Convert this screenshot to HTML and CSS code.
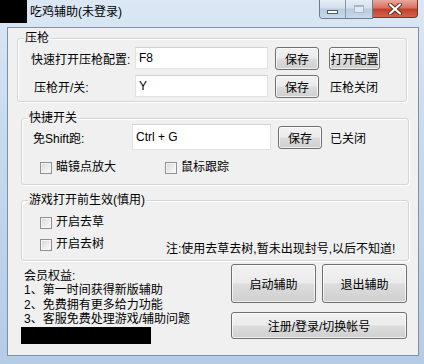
FILE: index.html
```html
<!DOCTYPE html>
<html lang="zh-CN">

<head>
    <meta charset="UTF-8">
    <title>吃鸡辅助(未登录)</title>
    <link rel="stylesheet" href="styles.css">
</head>

<body>
    <div class="window">
        <div class="titlebar">
            <div class="app-icon"></div>
            <div class="title">吃鸡辅助(未登录)</div>
            <div class="controls">
                <div class="ctl-pair">
                    <span class="ctl ctl-min"><i></i></span>
                    <span class="ctl ctl-max"><i></i></span>
                </div>
                <span class="ctl ctl-close">
                    <svg width="16" height="12" viewBox="0 0 16 12">
                        <path d="M3 1.5 L13 10.5 M13 1.5 L3 10.5" stroke="#5a2a24" stroke-width="4" stroke-linecap="round"/>
                        <path d="M3 1.5 L13 10.5 M13 1.5 L3 10.5" stroke="#fff" stroke-width="2.2" stroke-linecap="round"/>
                    </svg>
                </span>
            </div>
        </div>

        <div class="client">
            <!-- 压枪 -->
            <div class="group group-recoil">
                <span class="legend">压枪</span>
                <div class="row">
                    <label class="field-label label-cfg">快速打开压枪配置:</label>
                    <input class="field field-sm" type="text" value="F8">
                    <button class="btn btn-save">保存</button>
                    <button class="btn btn-open">打开配置</button>
                </div>
                <div class="row">
                    <label class="field-label label-switch">压枪开/关:</label>
                    <input class="field field-sm" type="text" value="Y">
                    <button class="btn btn-save">保存</button>
                    <span class="status">压枪关闭</span>
                </div>
            </div>

            <!-- 快捷开关 -->
            <div class="group group-hotkey">
                <span class="legend">快捷开关</span>
                <div class="row row-tall">
                    <label class="field-label label-shift">免Shift跑:</label>
                    <input class="field field-lg" type="text" value="Ctrl + G">
                    <button class="btn btn-save btn-save2">保存</button>
                    <span class="status">已关闭</span>
                </div>
                <div class="check-row check-first">
                    <label class="check"><span class="box"></span>瞄镜点放大</label>
                    <label class="check"><span class="box"></span>鼠标跟踪</label>
                </div>
            </div>

            <!-- 游戏打开前生效 -->
            <div class="group group-game">
                <span class="legend">游戏打开前生效(慎用)</span>
                <div class="check-row check-grass">
                    <label class="check"><span class="box"></span>开启去草</label>
                </div>
                <div class="check-row check-tree">
                    <label class="check"><span class="box"></span>开启去树</label>
                    <span class="note">注:使用去草去树,暂未出现封号,以后不知道!</span>
                </div>
            </div>

            <div class="bottom">
                <div class="member">
                    <div>会员权益:</div>
                    <div>1、第一时间获得新版辅助</div>
                    <div>2、免费拥有更多给力功能</div>
                    <div>3、客服免费处理游戏/辅助问题</div>
                    <div class="redacted"></div>
                </div>
                <div class="actions">
                    <button class="btn btn-big">启动辅助</button>
                    <button class="btn btn-big">退出辅助</button>
                    <button class="btn btn-wide">注册/登录/切换帐号</button>
                </div>
            </div>
        </div>
    </div>
</body>

</html>
```

FILE: styles.css
```css
* {
    box-sizing: border-box;
}

body {
    margin: 0;
    font-family: "Liberation Sans", "Noto Sans CJK SC", sans-serif;
    font-size: 12px;
    color: #000;
    background: #b9cfe7;
}

.window {
    width: 424px;
    height: 364px;
    display: flex;
    flex-direction: column;
    background: linear-gradient(to bottom, #dbe7f4 0%, #c6d9ee 40%, #b4cce6 100%);
    overflow: hidden;
}

/* 标题栏 */
.titlebar {
    height: 27px;
    display: flex;
    align-items: flex-start;
    flex-shrink: 0;
}

.app-icon {
    width: 27px;
    height: 23px;
    background: #000;
}

.title {
    margin-left: 3px;
    line-height: 27px;
    margin-top: -1px;
}

.controls {
    margin-left: auto;
    margin-right: 6px;
    display: flex;
}

.ctl-pair {
    display: flex;
    border: 1px solid #6d7c90;
    border-top: none;
    border-radius: 0 0 0 4px;
    overflow: hidden;
}

.ctl {
    height: 18px;
    display: flex;
    align-items: center;
    justify-content: center;
}

.ctl-min,
.ctl-max {
    width: 26px;
    background: linear-gradient(to bottom, #e6eef7 0%, #d2dfed 45%, #b8cbe0 50%, #c9d9ea 100%);
}

.ctl-min {
    border-right: 1px solid #8896a8;
}

.ctl-min i {
    width: 11px;
    height: 4px;
    margin-top: 6px;
    background: #fff;
    border: 1px solid #4d5a6b;
}

.ctl-max i {
    width: 10px;
    height: 8px;
    border: 1px solid #a9b6c6;
    border-top-width: 2px;
    background: #e2eaf3;
}

.ctl-close {
    width: 45px;
    border: 1px solid #6b3a34;
    border-top: none;
    border-left: none;
    border-radius: 0 0 4px 0;
    background: linear-gradient(to bottom, #e9a99d 0%, #d8735f 45%, #c2402a 55%, #d0644e 100%);
}

/* 客户区 */
.client {
    flex: 1;
    margin: 0 5px 8px 7px;
    background: #f0f0f0;
    border: 1px solid #7d90a6;
    display: flex;
    flex-direction: column;
}

.group {
    position: relative;
    border: 1px solid #d5d5d5;
    border-radius: 3px;
    box-shadow: 1px 1px 0 #fff, inset 1px 1px 0 #fff;
}

.legend {
    position: absolute;
    top: -8px;
    left: 6px;
    padding: 0 1px;
    line-height: 14px;
    background: #f0f0f0;
}

.group-recoil {
    margin: 10px 0 0 9px;
    width: 390px;
    height: 64px;
    padding-top: 6px;
}

.group-hotkey {
    margin: 16px 0 0 13px;
    width: 388px;
    height: 67px;
    padding-top: 4px;
}

.group-game {
    margin: 15px 0 0 13px;
    width: 388px;
    height: 61px;
    padding-top: 15px;
}

.row {
    display: flex;
    align-items: center;
    height: 26px;
    margin-bottom: 2px;
    white-space: nowrap;
}

.row-tall {
    height: 28px;
}

.field-label {
    flex-shrink: 0;
}

.label-cfg {
    width: 117px;
    padding-left: 13px;
}

.label-switch {
    width: 117px;
    padding-left: 16px;
}

.label-shift {
    width: 110px;
    padding-left: 11px;
}

.field {
    font: inherit;
    height: 22px;
    background: #fff;
    border: 1px solid #e2e2e2;
    border-top-color: #d2d2d2;
    padding: 0 3px;
    outline: none;
}

.field-sm {
    width: 133px;
}

.field-lg {
    width: 139px;
    height: 26px;
}

.btn {
    font: inherit;
    color: #000;
    border: 1px solid #707070;
    border-radius: 3px;
    background: linear-gradient(to bottom, #f2f2f2 0%, #ebebeb 48%, #dddddd 52%, #cfcfcf 100%);
    box-shadow: inset 0 0 0 1px rgba(255, 255, 255, 0.7);
    padding: 0;
    white-space: nowrap;
    cursor: default;
}

.btn-save {
    width: 44px;
    height: 23px;
    margin-left: 7px;
}

.btn-open {
    width: 51px;
    height: 23px;
    margin-left: 10px;
}

.status {
    margin-left: 11px;
}

.btn-save2 + .status {
    margin-left: 8px;
}

.check-row {
    display: flex;
    align-items: flex-start;
    padding-left: 18px;
    white-space: nowrap;
}

.check-first {
    margin-top: 10px;
}

.check-tree {
    margin-top: 9px;
}

.check {
    width: 125px;
    display: flex;
    align-items: center;
    height: 13px;
    line-height: 13px;
}

.box {
    width: 12px;
    height: 12px;
    margin-right: 4px;
    border: 1px solid #8f8f8f;
    background: linear-gradient(135deg, #d4d6da 0%, #eeeeee 60%, #fafafa 100%);
    box-shadow: inset 0 0 0 1px #f6f6f6;
}

.note {
    margin: 3px 0 0 1px;
    line-height: 16px;
}

/* 底部 */
.bottom {
    display: flex;
    justify-content: space-between;
}

.member {
    margin: 8px 0 0 16px;
    line-height: 14.4px;
}

.redacted {
    width: 130px;
    height: 17px;
    margin: 0 0 0 -3px;
    background: #000;
}

.actions {
    margin: 3px 11px 0 0;
    display: grid;
    grid-template-columns: 85px 85px;
    grid-template-rows: 39px 27px;
    column-gap: 6px;
    row-gap: 9px;
}

.btn-wide {
    grid-column: 1 / 3;
}
```
